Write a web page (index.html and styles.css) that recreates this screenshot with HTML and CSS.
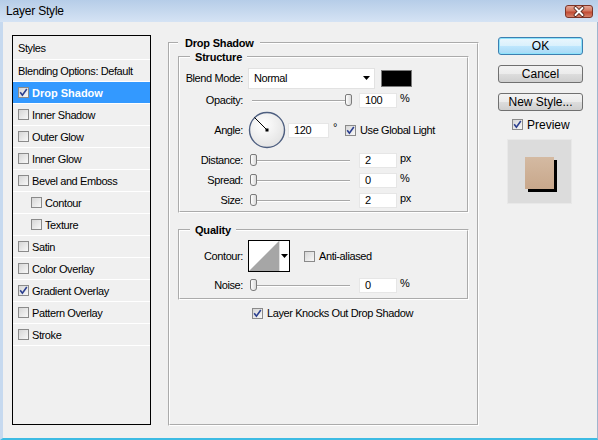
FILE: index.html
```html
<!DOCTYPE html>
<html lang="en">
<head>
    <meta charset="UTF-8">
    <title>Layer Style</title>
    <link rel="stylesheet" href="styles.css">
</head>
<body>
    <div class="window">
        <div class="titlebar">
            <span class="title">Layer Style</span>
            <span class="close-btn">
                <svg width="26" height="11" viewBox="0 0 26 11">
                    <path d="M9.5 2 L16.5 9 M16.5 2 L9.5 9" stroke="#4a1e16" stroke-width="3.6" stroke-linecap="round"/>
                    <path d="M9.5 2 L16.5 9 M16.5 2 L9.5 9" stroke="#fff" stroke-width="2" stroke-linecap="round"/>
                </svg>
            </span>
        </div>

        <div class="dialog">
            <!-- Styles list -->
            <div class="styles-list">
                <div class="list-head">Styles</div>
                <div class="item">Blending Options: Default</div>
                <div class="item selected"><span class="cb on"><svg width="9" height="9" viewBox="0 0 9 9"><path d="M1.2 4.2 L3.4 7.2 L7.8 1" fill="none" stroke="#2b3f8f" stroke-width="1.6"/></svg></span>Drop Shadow</div>
                <div class="item"><span class="cb"></span>Inner Shadow</div>
                <div class="item"><span class="cb"></span>Outer Glow</div>
                <div class="item"><span class="cb"></span>Inner Glow</div>
                <div class="item"><span class="cb"></span>Bevel and Emboss</div>
                <div class="item sub"><span class="cb"></span>Contour</div>
                <div class="item sub"><span class="cb"></span>Texture</div>
                <div class="item"><span class="cb"></span>Satin</div>
                <div class="item"><span class="cb"></span>Color Overlay</div>
                <div class="item"><span class="cb on"><svg width="9" height="9" viewBox="0 0 9 9"><path d="M1.2 4.2 L3.4 7.2 L7.8 1" fill="none" stroke="#2b3f8f" stroke-width="1.6"/></svg></span>Gradient Overlay</div>
                <div class="item"><span class="cb"></span>Pattern Overlay</div>
                <div class="item last"><span class="cb"></span>Stroke</div>
            </div>

            <!-- Drop Shadow settings -->
            <fieldset class="group outer">
                <legend>Drop Shadow</legend>

                <fieldset class="group structure">
                    <legend>Structure</legend>
                    <div class="row blend-row">
                        <span class="label">Blend Mode:</span>
                        <div class="select">
                            <span>Normal</span>
                            <svg width="7" height="4" viewBox="0 0 7 4"><polygon points="0,0 7,0 3.5,4" fill="#000"/></svg>
                        </div>
                        <span class="swatch"></span>
                    </div>
                    <div class="row">
                        <span class="label">Opacity:</span>
                        <div class="slider"><span class="thumb max"></span></div>
                        <span class="num">100</span>
                        <span class="unit">%</span>
                    </div>
                    <div class="row angle-row">
                        <span class="label">Angle:</span>
                        <svg class="dial" width="38" height="38" viewBox="0 0 38 38">
                            <defs>
                                <radialGradient id="dialFill" cx="40%" cy="35%" r="70%">
                                    <stop offset="0" stop-color="#ffffff"/>
                                    <stop offset="1" stop-color="#e2e2e2"/>
                                </radialGradient>
                            </defs>
                            <circle cx="19" cy="19" r="17.5" fill="url(#dialFill)" stroke="#4e5f80" stroke-width="1.4"/>
                            <line x1="19" y1="19" x2="6.5" y2="6.5" stroke="#000" stroke-width="1"/>
                            <rect x="17.5" y="17.5" width="3" height="3" fill="#000"/>
                        </svg>
                        <span class="num wide">120</span>
                        <span class="degree">°</span>
                        <span class="cb on"><svg width="9" height="9" viewBox="0 0 9 9"><path d="M1.2 4.2 L3.4 7.2 L7.8 1" fill="none" stroke="#2b3f8f" stroke-width="1.6"/></svg></span>
                        <span class="cb-text">Use Global Light</span>
                    </div>
                    <div class="row">
                        <span class="label">Distance:</span>
                        <div class="slider"><span class="thumb"></span></div>
                        <span class="num">2</span>
                        <span class="unit">px</span>
                    </div>
                    <div class="row">
                        <span class="label">Spread:</span>
                        <div class="slider"><span class="thumb"></span></div>
                        <span class="num">0</span>
                        <span class="unit">%</span>
                    </div>
                    <div class="row">
                        <span class="label">Size:</span>
                        <div class="slider"><span class="thumb"></span></div>
                        <span class="num">2</span>
                        <span class="unit">px</span>
                    </div>
                </fieldset>

                <fieldset class="group quality">
                    <legend>Quality</legend>
                    <div class="row contour-row">
                        <span class="label">Contour:</span>
                        <div class="contour">
                            <svg width="30" height="30" viewBox="0 0 30 30"><polygon points="0,30 30,0 30,30" fill="#a6a6a6"/></svg>
                            <span class="contour-arrow">
                                <svg width="7" height="4" viewBox="0 0 7 4"><polygon points="0,0 7,0 3.5,4" fill="#000"/></svg>
                            </span>
                        </div>
                        <span class="cb anti"></span>
                        <span class="cb-text">Anti-aliased</span>
                    </div>
                    <div class="row">
                        <span class="label">Noise:</span>
                        <div class="slider"><span class="thumb"></span></div>
                        <span class="num">0</span>
                        <span class="unit">%</span>
                    </div>
                </fieldset>

                <div class="knock">
                    <span class="cb on"><svg width="9" height="9" viewBox="0 0 9 9"><path d="M1.2 4.2 L3.4 7.2 L7.8 1" fill="none" stroke="#2b3f8f" stroke-width="1.6"/></svg></span>
                    <span class="cb-text">Layer Knocks Out Drop Shadow</span>
                </div>
            </fieldset>

            <!-- Buttons and preview -->
            <div class="side">
                <button class="btn default">OK</button>
                <button class="btn">Cancel</button>
                <button class="btn">New Style...</button>
                <div class="preview-toggle">
                    <span class="cb on"><svg width="9" height="9" viewBox="0 0 9 9"><path d="M1.2 4.2 L3.4 7.2 L7.8 1" fill="none" stroke="#2b3f8f" stroke-width="1.6"/></svg></span>
                    <span class="preview-label">Preview</span>
                </div>
                <div class="preview-box">
                    <div class="preview-swatch"></div>
                </div>
            </div>
        </div>
    </div>
</body>
</html>
```

FILE: styles.css
```css
* {
    box-sizing: border-box;
}
body {
    margin: 0;
    font-family: "Liberation Sans", Arial, sans-serif;
    font-size: 11px;
    color: #000;
}
.window {
    width: 598px;
    height: 440px;
    display: flex;
    flex-direction: column;
    background-color: #c8dbf1;
}
/* Title bar */
.titlebar {
    height: 22px;
    flex: none;
    display: flex;
    align-items: center;
    justify-content: space-between;
    padding: 0 5px 0 6px;
    background: linear-gradient(#b6cde8, #d5e3f4);
}
.title {
    font-size: 12px;
    letter-spacing: -0.2px;
    color: #000;
}
.close-btn {
    width: 28px;
    height: 13px;
    display: flex;
    align-items: center;
    justify-content: center;
    border: 1px solid #7d3427;
    border-radius: 3px;
    background: linear-gradient(#e6a898 0, #d27760 45%, #c14a33 55%, #d5826b 100%);
}
/* Dialog body */
.dialog {
    flex: 1;
    display: flex;
    align-items: flex-start;
    background-color: #f0f0f0;
    border-left: 3px solid #c6d9ef;
    border-right: 1px solid #9fb6cf;
    border-bottom: 2px solid #3dbbe3;
    letter-spacing: -0.4px;
}
/* Left list */
.styles-list {
    width: 139px;
    height: 390px;
    margin: 13px 0 0 9px;
    border: 1px solid #000;
    background-color: #f0f0f0;
    flex: none;
}
.list-head {
    height: 23px;
    display: flex;
    align-items: center;
    padding-left: 5px;
}
.item {
    height: 22px;
    display: flex;
    align-items: center;
    padding-left: 5px;
    border-top: 1px solid #fff;
}
.item.last {
    border-bottom: 1px solid #fff;
    height: 23px;
}
.item.sub {
    padding-left: 18px;
}
.item .cb {
    margin-right: 3px;
}
.item.selected {
    background-color: #3399ff;
    color: #fff;
    font-weight: bold;
    letter-spacing: 0;
}
/* Checkbox */
.cb {
    width: 11px;
    height: 11px;
    flex: none;
    display: inline-flex;
    align-items: center;
    justify-content: center;
    border: 1px solid #8a8a8a;
    background: linear-gradient(135deg, #d6d6d6, #f8f8f8);
}
.cb-text {
    margin-left: 4px;
}
/* Group boxes */
.group {
    margin: 0;
    padding: 0;
    border: 2px groove #fff;
    min-width: 0;
}
.group legend {
    font-weight: bold;
    line-height: 14px;
    padding: 0 5px;
    margin-left: 10px;
    letter-spacing: -0.2px;
}
.outer {
    width: 311px;
    height: 390px;
    margin: 14px 0 0 17px;
    padding: 0 8px;
    flex: none;
}
.outer > legend {
    padding: 0 6px 0 7px;
    margin-left: 0;
}
.structure {
    padding-bottom: 1px;
}
.quality {
    margin-top: 10px;
    padding-bottom: 3px;
}
.row {
    height: 20px;
    display: flex;
    align-items: center;
}
.label {
    width: 63px;
    text-align: right;
    margin-right: 5px;
    flex: none;
}
.blend-row {
    height: 24px;
    margin-top: 2px;
}
.angle-row {
    height: 40px;
}
.contour-row {
    height: 34px;
    margin-top: 2px;
    margin-bottom: 2px;
}
.select {
    width: 127px;
    height: 21px;
    display: flex;
    align-items: center;
    justify-content: space-between;
    padding: 0 4px 0 5px;
    background-color: #fff;
    border: 1px solid #e2e2e2;
}
.swatch {
    width: 31px;
    height: 17px;
    margin-left: 6px;
    background-color: #000;
    border: 1px solid #7a7a7a;
}
/* Sliders */
.slider {
    position: relative;
    width: 104px;
    height: 12px;
    margin-right: 7px;
    flex: none;
}
.slider::before {
    content: "";
    position: absolute;
    left: 4px;
    right: 2px;
    top: 6px;
    height: 1px;
    background-color: #a8a8a8;
    border-bottom: 1px solid #fff;
    box-sizing: content-box;
}
.thumb {
    position: absolute;
    left: 2px;
    top: 0;
    width: 7px;
    height: 12px;
    border: 1px solid #7b7b7b;
    border-radius: 2px 2px 3px 3px;
    background: linear-gradient(90deg, #ffffff, #dadada);
}
.thumb.max {
    left: auto;
    right: 0;
}
.num {
    width: 38px;
    height: 15px;
    line-height: 13px;
    padding-left: 5px;
    background-color: #fff;
    border: 1px solid #e6e6e6;
    flex: none;
}
.num.wide {
    width: 41px;
    margin-left: 2px;
}
.unit {
    margin-left: 3px;
    align-self: flex-start;
    margin-top: 2px;
}
.degree {
    margin: -6px 0 0 4px;
    width: 8px;
}
.angle-row .cb {
    margin-left: 4px;
}
/* Contour picker */
.contour {
    width: 42px;
    height: 32px;
    display: flex;
    border: 1px solid #000;
    background-color: #fff;
}
.contour-arrow {
    flex: 1;
    display: flex;
    align-items: center;
    justify-content: center;
    border-left: 1px solid #e0e0e0;
}
.cb.anti {
    margin-left: 14px;
}
.knock {
    display: flex;
    align-items: center;
    height: 14px;
    margin-top: 6px;
    padding-left: 74px;
}
/* Right column */
.side {
    width: 85px;
    margin: 15px 0 0 19px;
    flex: none;
    letter-spacing: 0;
}
.btn {
    display: block;
    width: 85px;
    height: 18px;
    margin: 0 0 10px 0;
    padding: 0;
    font-family: "Liberation Sans", Arial, sans-serif;
    font-size: 12px;
    line-height: 16px;
    color: #000;
    border: 1px solid #707070;
    border-radius: 3px;
    background: linear-gradient(#f3f3f3 0, #ebebeb 50%, #dddddd 50%, #cfcfcf 100%);
}
.btn.default {
    border-color: #3c7fb1;
    box-shadow: inset 0 0 0 1px #8ee3fb;
    background: linear-gradient(#eaf6fd 0, #d9f0fc 50%, #bee6fd 50%, #a7d9f5 100%);
}
.preview-toggle {
    display: flex;
    align-items: center;
    height: 13px;
    margin-top: -3px;
    padding-left: 14px;
}
.preview-label {
    font-size: 12px;
    margin-left: 4px;
}
.preview-box {
    width: 65px;
    height: 65px;
    margin: 8px 0 0 9px;
    padding: 17px 0 0 17px;
    background-color: #dcdcdc;
    border: 1px solid #e8e8e8;
}
.preview-swatch {
    width: 29px;
    height: 32px;
    background: linear-gradient(#d4baa2, #c8a78b);
    box-shadow: 3px 3px 0 #000;
}
```
